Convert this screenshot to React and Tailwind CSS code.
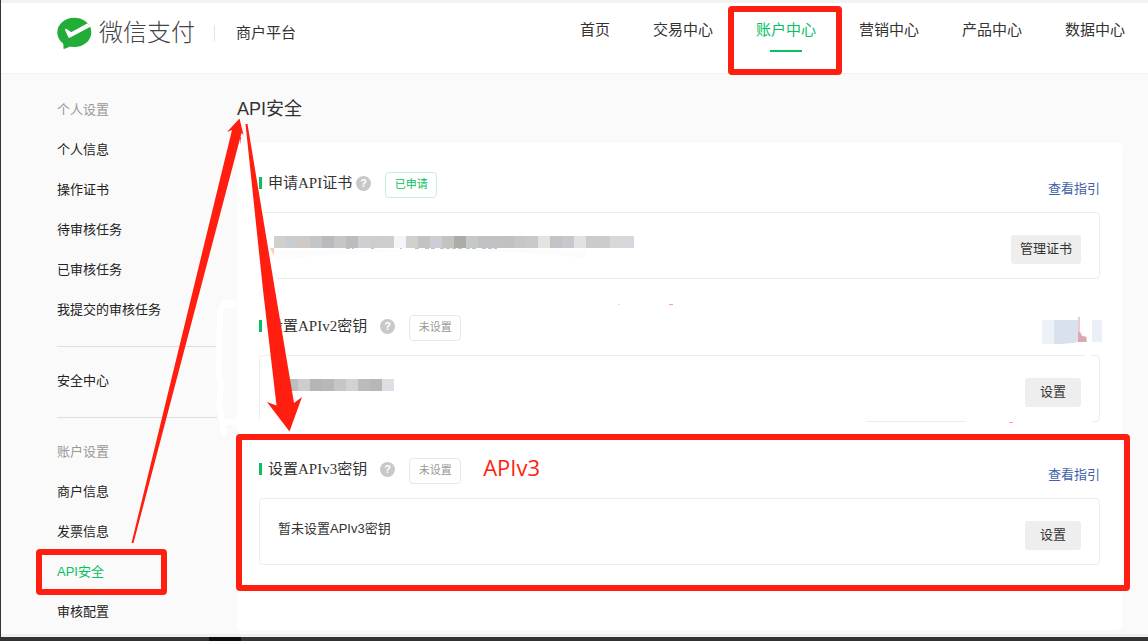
import React from 'react'
import clsx from 'clsx'

const navItems = ['首页', '交易中心', '账户中心', '营销中心', '产品中心', '数据中心']

const menuGroups = [
  {
    title: '个人设置',
    items: ['个人信息', '操作证书', '待审核任务', '已审核任务', '我提交的审核任务'],
  },
  { items: ['安全中心'] },
  {
    title: '账户设置',
    items: ['商户信息', '发票信息', 'API安全', '审核配置'],
  },
]

const certTiles = [
  '#d2d0cb', '#c8cdd0', '#d0cac7', '#c3c5c6', '#b9babd', '#c6c6c6', '#bcbcc0', '#cfcfd1', '#cecccf', '#cdcfcf',
  '#f3f5f9', '#d1d1cc', '#c4c3c1', '#cbcfd5', '#c3c3bf', '#abada9', '#c5cac9', '#c3c1c6', '#c3c1c4', '#c0c2c1',
  '#c6c6c5', '#c9c9ca', '#e2e4df', '#c2c3c6', '#c7c8cb', '#e2e2e3', '#cbcbcb', '#cdcbcd', '#d8d9d5', '#d6d7dc',
]

const keyTiles = [
  '#c6c6c6', '#bcbfc0', '#cfcdcc', '#b4b6b6', '#b7b8ba', '#c5c6cb', '#d2d2d0', '#bbbbb9', '#b9b7b6', '#dce0e4',
]

const Logo = () => (
  <a href="#" className="flex items-center">
    <svg className="h-8 w-9" viewBox="0 0 36 32" fill="none">
      <ellipse cx="17.3" cy="15.4" rx="17" ry="14.6" fill="#22ac38" />
      <path d="M6 24 L6.6 32 Q10 31.5 15 28 Z" fill="#22ac38" />
      <path
        d="M8 12.8 L11.2 20 Q11.9 21.3 13.2 20.6 L33.4 9.8 L30.6 6.2 L15 14.8 Q14.3 15.2 13.6 14.7 L9.6 12 Q8 11.3 8 12.8 Z"
        fill="#fff"
      />
    </svg>
    <span className="ml-1.5 text-2xl leading-8 font-light text-[#444]">微信支付</span>
  </a>
)

// Hand-drawn style frame around a highlighted element
const RedFrame = ({ className }) => (
  <div className={clsx('pointer-events-none absolute z-20 rounded border-6 border-[#ff1e10]', className)} />
)

const Header = () => (
  <header className="flex h-[71px] items-start justify-between border-b border-[#f1f1f1] bg-white pr-[23px] pl-14">
    <div className="flex items-center pt-3.5">
      <Logo />
      <div className="ml-[19px] h-4 w-px bg-[#e3e3e3]" />
      <span className="ml-[21px] text-[15px] leading-8 text-[#333]">商户平台</span>
    </div>
    <nav className="flex gap-[43px] pt-[17px] whitespace-nowrap">
      {navItems.map((item) => {
        const active = item === '账户中心'
        return (
          <a
            key={item}
            href="#"
            className={clsx(
              'relative flex flex-col items-center text-[15px] leading-5',
              active ? 'text-[#07c160]' : 'text-[#333]'
            )}
          >
            {item}
            {active && <span className="mt-2.5 h-0.5 w-8 bg-[#07c160]" />}
            {active && <RedFrame className="-top-3.5 -right-[26px] -left-7 h-[69px]" />}
          </a>
        )
      })}
    </nav>
  </header>
)

const Sidebar = () => (
  <aside className="w-40 shrink-0 pt-4 text-[13px] leading-10">
    {menuGroups.map((group, i) => (
      <div key={i} className={clsx(i > 0 && 'mt-4 border-t border-[#dedede] pt-3.5')}>
        {group.title && <div className="text-[#999]">{group.title}</div>}
        <ul>
          {group.items.map((item) => (
            <li key={item} className="relative">
              <a href="#" className={item === 'API安全' ? 'text-[#07c160]' : 'text-[#222]'}>
                {item}
              </a>
              {item === 'API安全' && <RedFrame className="-top-[3px] -left-[21px] h-[46px] w-[131px]" />}
            </li>
          ))}
        </ul>
      </div>
    ))}
  </aside>
)

const Mosaic = ({ tiles }) => (
  <div className="mt-px flex overflow-hidden">
    {tiles.map((color, i) => (
      <span key={i} className="size-3" style={{ backgroundColor: color }} />
    ))}
  </div>
)

const GuideLink = () => (
  <a href="#" className="text-[13px] leading-[18px] text-[#3f62ab]">
    查看指引
  </a>
)

const HiddenLink = () => (
  <svg className="-mr-0.5 -mb-[3px] h-[27px] w-[60px]" viewBox="0 0 60 27">
    <path d="M0 3 H12 V27 H0 Z" fill="#edf1f8" />
    <path d="M12 3 H36 V25 Q26 27 12 27 Z" fill="#dae1ee" />
    <path d="M36 0 H38 V14 Q39 19 41 19 L45 20 V25 H36 Z" fill="#f3c9cc" />
    <path d="M36 15 H38 L40 19 L44 20 V25 H36 Z" fill="#dba8b1" />
    <path d="M50 3 H60 V25 H50 Z" fill="#ebeff7" />
  </svg>
)

const Section = ({ title, spaced, done, status, note, link, action, framed, children }) => (
  <section className="relative">
    <div className="mb-3.5 flex h-[26px] items-end justify-between">
      <div className="flex h-full items-start">
        <h2 className="flex items-center font-['Liberation_Serif','Noto_Sans_CJK_SC',serif] text-[15px] leading-[22px] text-[#333]">
          <span className="mr-1.5 h-3 w-[3px] bg-[#07c160]" />
          {title}
        </h2>
        <span
          className={clsx(
            'mt-1 flex size-[15px] items-center justify-center rounded-full bg-[#c8c8c8] text-[11px] font-bold text-white',
            spaced ? 'ml-[13px]' : 'ml-1'
          )}
        >
          ?
        </span>
        <span
          className={clsx(
            'ml-3.5 flex h-[26px] w-[52px] items-center justify-center rounded border pb-0.5 text-[11px]',
            done ? 'border-[#c4f0d8] text-[#07c160]' : 'border-[#e8e8e8] text-[#999]'
          )}
        >
          {status}
        </span>
        {note && (
          <span className="ml-[22px] font-['Open_Sans',sans-serif] text-[22px] leading-[18px] text-[#ff1e10]">{note}</span>
        )}
      </div>
      {link}
    </div>
    <div className="flex items-start justify-between rounded border border-[#ededed] pt-[22px] pr-[18px] pb-3.5 pl-3.5">
      {children}
      <button className="h-[29px] min-w-14 rounded-[3px] bg-[#eee] px-[9px] pb-0.5 text-[13px] text-[#333]">
        {action}
      </button>
    </div>
    {framed && <RedFrame className="-top-6 -right-[30px] -bottom-[26px] -left-[23px]" />}
  </section>
)

// Arrows and brush marks drawn over the page
const Annotations = () => (
  <svg className="pointer-events-none absolute top-0 -left-px z-10" width="1148" height="641" fill="none">
    <g stroke="#fff" strokeLinecap="round" strokeLinejoin="round">
      <path d="M236 303 L224 303 L220 312 L219 372 L221 385 L219 405 L222 420 L224 433" strokeWidth="6" />
      <path d="M224 422 H240" strokeWidth="6" />
      <path d="M233 306 L225 305" strokeWidth="5" />
      <path d="M259 216 V278 H275" strokeWidth="4" />
      <path d="M260 421 H864 M968 421 H1090" strokeWidth="4" />
      <path d="M1087 355 H1089" strokeWidth="4" />
    </g>
    <path d="M272 380 H288 V392 H272 Z" fill="#fff" />
    <path d="M270 250 Q272 260 282 260 Q420 242 585 258 L585 249 Z" fill="#fcfcfc" />
    <path d="M270 248 H274 V256 Z" fill="#ffc9c5" />
    <path
      d="M346 248.5 h8 M371 248.5 h3 M400 248.5 h2 M415 248.5 h6 M425 248.5 h12 M440 248.5 h22 M466 248.5 h10 M482 248.5 h15"
      stroke="#c2c2c2"
      strokeDasharray="4 2"
    />
    <path d="M669 304.5 h4 M1009 422.5 h4" stroke="#ff9a94" />
    <path d="M618 304.5 h2" stroke="#ffd0cc" />
    <g fill="#ff1e10">
      <path d="M131.5 543 L232 130 L227 132 L239.5 118.5 L243.5 135 L241.5 133 L133.5 543 Z" />
      <path d="M240 137 H241 L240.5 145 Z" />
      <path d="M245.5 124 H247.5 L275 290 L294 403 L302 397 L289.5 431.5 L267 402 L276.5 405.5 L263 290 Z" />
    </g>
  </svg>
)

export default function App() {
  return (
    <div className="relative w-full overflow-hidden border-l border-[#333] bg-[#fafafa] font-['Liberation_Sans','Noto_Sans_CJK_SC',sans-serif]">
      <div className="h-[3px] bg-[#f2f2f2]" />
      <Header />
      <div className="flex gap-5 pr-[26px] pl-14">
        <Sidebar />
        <main className="min-w-0 flex-1 pt-[21px] pb-1">
          <h1 className="mb-5 text-lg leading-7 text-[#333]">API安全</h1>
          <div className="flex flex-col gap-9 rounded bg-white px-[22px] pt-[29px] pb-[65px]">
            <Section title="申请API证书" done status="已申请" link={<GuideLink />} action="管理证书">
              <Mosaic tiles={certTiles} />
            </Section>
            <Section title="设置APIv2密钥" spaced status="未设置" link={<HiddenLink />} action="设置">
              <Mosaic tiles={keyTiles} />
            </Section>
            <Section title="设置APIv3密钥" spaced status="未设置" note="APIv3" link={<GuideLink />} action="设置" framed>
              <p className="pl-1 text-[13px] leading-4 text-[#333]">暂未设置APIv3密钥</p>
            </Section>
          </div>
        </main>
      </div>
      <div className="h-[3px] bg-[#f0f0f0]" />
      <div className="h-1 bg-[#333] pl-52">
        <div className="h-1 w-8 bg-[#0c0d12]" />
      </div>
      <Annotations />
    </div>
  )
}
